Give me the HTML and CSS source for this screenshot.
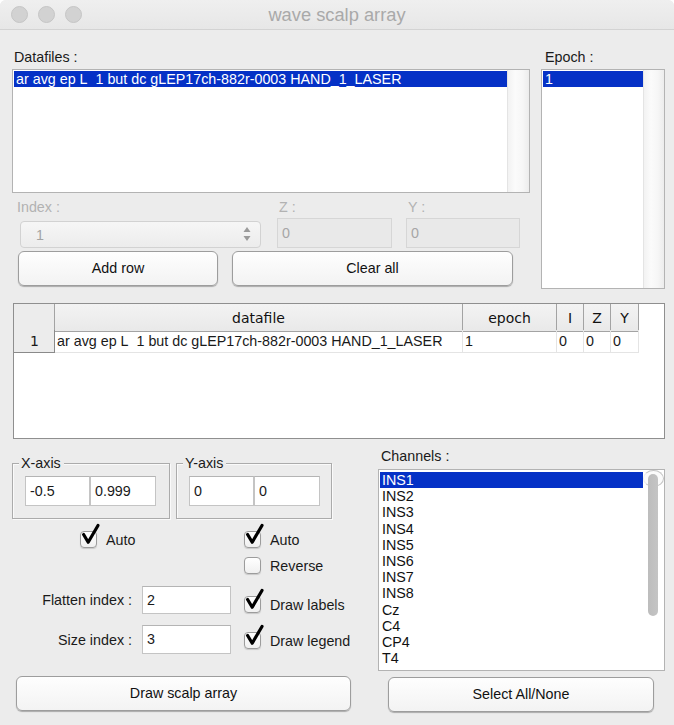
FILE: index.html
```html
<!DOCTYPE html>
<html>
<head>
<meta charset="utf-8">
<title>wave scalp array</title>
<link rel="stylesheet" href="styles.css">
</head>
<body>
<div class="window">
  <div class="titlebar">
    <div class="lights"><span class="light"></span><span class="light"></span><span class="light"></span></div>
    <div class="title">wave scalp array</div>
    <div></div>
  </div>
  <div class="content">
    <section class="top">
      <div class="top-left">
        <div class="lbl lbl-data">Datafiles :</div>
        <div class="listbox datalist">
          <div class="items"><div class="item sel">ar avg ep L&nbsp; 1 but dc gLEP17ch-882r-0003 HAND_1_LASER</div></div>
          <div class="track"></div>
        </div>
        <div class="idx">
          <div class="lbl dis l-index">Index :</div>
          <div class="lbl dis l-z">Z :</div>
          <div class="lbl dis l-y">Y :</div>
          <div class="popup">
            <span>1</span>
            <svg class="arrows" width="8" height="16" viewBox="0 0 8 16"><path d="M4 1 L7.5 6 L0.5 6 Z" fill="#9a9a9a"/><path d="M4 15 L7.5 10 L0.5 10 Z" fill="#9a9a9a"/></svg>
          </div>
          <div class="field disfield f-z">0</div>
          <div class="field disfield f-y">0</div>
        </div>
        <div class="btnrow">
          <div class="btn b-add">Add row</div>
          <div class="btn b-clear">Clear all</div>
        </div>
      </div>
      <div class="top-right">
        <div class="lbl lbl-epoch">Epoch :</div>
        <div class="listbox epochlist">
          <div class="items"><div class="item sel">1</div></div>
          <div class="track"></div>
        </div>
      </div>
    </section>

    <section class="table">
      <div class="trow thead">
        <div class="th corner"></div>
        <div class="th">datafile</div>
        <div class="th">epoch</div>
        <div class="th">I</div>
        <div class="th">Z</div>
        <div class="th">Y</div>
      </div>
      <div class="trow tbody">
        <div class="rowhead">1</div>
        <div class="td">ar avg ep L&nbsp; 1 but dc gLEP17ch-882r-0003 HAND_1_LASER</div>
        <div class="td">1</div>
        <div class="td">0</div>
        <div class="td">0</div>
        <div class="td">0</div>
      </div>
    </section>

    <section class="bottom">
      <div class="bottom-left">
        <div class="groups">
          <div class="group g-x">
            <span class="group-title">X-axis</span>
            <div class="field f-a">-0.5</div><div class="field f-b">0.999</div>
          </div>
          <div class="group g-y">
            <span class="group-title">Y-axis</span>
            <div class="field f-a">0</div><div class="field f-b">0</div>
          </div>
        </div>
        <div class="row r-auto">
          <div class="cell-a">
            <label class="check"><span class="box on"><svg width="20" height="24" viewBox="0 0 20 24"><path d="M2.6 10.5 L7.2 18.2 L17 1.5" fill="none" stroke="#000" stroke-width="3.2" stroke-linecap="round" stroke-linejoin="round"/></svg></span>Auto</label>
          </div>
          <div class="cell-b">
            <label class="check"><span class="box on"><svg width="20" height="24" viewBox="0 0 20 24"><path d="M2.6 10.5 L7.2 18.2 L17 1.5" fill="none" stroke="#000" stroke-width="3.2" stroke-linecap="round" stroke-linejoin="round"/></svg></span>Auto</label>
          </div>
        </div>
        <div class="row r-rev">
          <div class="cell-a"></div>
          <div class="cell-b">
            <label class="check"><span class="box"></span>Reverse</label>
          </div>
        </div>
        <div class="row r-flat">
          <div class="cell-a"><span class="flbl">Flatten index :</span><div class="field f-idx">2</div></div>
          <div class="cell-b">
            <label class="check"><span class="box on"><svg width="20" height="24" viewBox="0 0 20 24"><path d="M2.6 10.5 L7.2 18.2 L17 1.5" fill="none" stroke="#000" stroke-width="3.2" stroke-linecap="round" stroke-linejoin="round"/></svg></span>Draw labels</label>
          </div>
        </div>
        <div class="row r-size">
          <div class="cell-a"><span class="flbl">Size index :</span><div class="field f-idx f-size">3</div></div>
          <div class="cell-b">
            <label class="check"><span class="box on"><svg width="20" height="24" viewBox="0 0 20 24"><path d="M2.6 10.5 L7.2 18.2 L17 1.5" fill="none" stroke="#000" stroke-width="3.2" stroke-linecap="round" stroke-linejoin="round"/></svg></span>Draw legend</label>
          </div>
        </div>
        <div class="btn b-draw">Draw scalp array</div>
      </div>
      <div class="bottom-right">
        <div class="lbl lbl-chan">Channels :</div>
        <div class="listbox chanlist">
          <div class="items">
            <div class="item ch sel">INS1</div>
            <div class="item ch">INS2</div>
            <div class="item ch">INS3</div>
            <div class="item ch">INS4</div>
            <div class="item ch">INS5</div>
            <div class="item ch">INS6</div>
            <div class="item ch">INS7</div>
            <div class="item ch">INS8</div>
            <div class="item ch">Cz</div>
            <div class="item ch">C4</div>
            <div class="item ch">CP4</div>
            <div class="item ch">T4</div>
          </div>
          <div class="track light"><div class="thumb"></div></div>
        </div>
        <div class="btn b-sel">Select All/None</div>
      </div>
    </section>
  </div>
</div>
</body>
</html>
```

FILE: styles.css
```css
* { box-sizing: border-box; }
html, body { margin: 0; padding: 0; background: #ffffff; }
body {
  font-family: "Liberation Sans", Arial, sans-serif;
  font-size: 14.3px;
  color: #1a1a1a;
}
.window {
  width: 674px;
  height: 725px;
  background: #ececec;
  border-radius: 6px 6px 0 0;
  overflow: hidden;
  display: flex;
  flex-direction: column;
}
.titlebar {
  height: 30px;
  flex: none;
  border-bottom: 1px solid #d3d3d3;
  background: linear-gradient(#efefef, #e7e7e7);
  display: grid;
  grid-template-columns: 1fr auto 1fr;
  align-items: center;
}
.lights { display: flex; gap: 10px; padding-left: 11px; margin-top: -1px; }
.light {
  width: 17px; height: 17px; border-radius: 50%;
  background: #d2d2d2;
  border: 1px solid #c5c5c5;
}
.title { font-size: 18.3px; color: #a9a9a9; line-height: 20px; margin-top: 0; }

.content { flex: 1; padding: 0 9px 0 12px; display: flex; flex-direction: column; }

.lbl { height: 16px; line-height: 16px; white-space: nowrap; }
.dis { color: #b2b2b2; }

.top { display: flex; gap: 11px; margin-top: 19px; }
.top-left { width: 518px; }
.top-right { width: 124px; }
.lbl-data { margin-left: 2px; }
.lbl-epoch { margin-left: 4px; }

.listbox {
  border: 1px solid #b3b3b3;
  background: #fff;
  display: flex;
  overflow: hidden;
}
.items { flex: 1; padding: 1px 0 0 1px; overflow: hidden; }
.item { height: 16px; line-height: 16px; padding-left: 2px; white-space: pre; color: #111; }
.item.sel { background: #0531c6; color: #fff; }
.track {
  width: 22px;
  flex: none;
  background: linear-gradient(to right, #f2f2f2, #fbfbfb 35%, #f6f6f6 70%, #ececec);
  border-left: 1px solid #e4e4e4;
}
.datalist { margin-top: 4px; height: 124px; }
.epochlist { margin-top: 4px; height: 220px; }
.epochlist .track { width: 21px; }

.idx {
  display: grid;
  grid-template-columns: 265px 129px 124px;
  grid-template-rows: 16px 30px;
  row-gap: 3px;
  margin-top: 6px;
}
.l-index { margin-left: 5px; }
.l-z, .l-y { margin-left: 2px; }
.popup {
  margin: 3px 0 0 8px;
  width: 241px;
  height: 27px;
  border: 1px solid #d2d2d2;
  border-radius: 4px;
  background: linear-gradient(#f6f6f6, #ececec);
  display: flex;
  align-items: center;
  justify-content: space-between;
  padding: 0 9px 0 15px;
  color: #a3a3a3;
}
.arrows { margin-top: -2px; }
.field {
  height: 30px;
  background: #fff;
  border: 1px solid #c4c4c4;
  border-top-color: #b4b4b4;
  padding-left: 4px;
  line-height: 28px;
  white-space: nowrap;
}
.disfield { background: #e9e9e9; border-color: #d6d6d6; color: #a6a6a6; }
.f-z { width: 115px; }
.f-y { width: 114px; }

.btnrow { display: flex; margin-top: 3px; }
.btn {
  height: 35px;
  border: 1px solid #9d9d9d;
  border-radius: 6px;
  background: linear-gradient(#fefefe, #f3f3f3);
  box-shadow: 0 1px 1px rgba(0,0,0,0.28);
  display: flex;
  align-items: center;
  justify-content: center;
  color: #111;
  padding-bottom: 1px;
}
.b-add { margin-left: 6px; width: 200px; }
.b-clear { margin-left: 14px; width: 281px; }

.table {
  margin: 14px 0 0 1px;
  width: 652px;
  height: 136px;
  border: 1px solid #8f8f8f;
  background: #fff;
  flex: none;
}
.trow {
  display: grid;
  grid-template-columns: 41px 408px 94px 27px 27px 28px;
}
.thead { height: 26px; }
.th {
  background: linear-gradient(#f3f3f3, #e9e9e9);
  border-right: 1px solid #a3a3a3;
  border-bottom: 1px solid #a3a3a3;
  font-family: "DejaVu Sans", sans-serif;
  font-size: 14px;
  color: #111;
  text-align: center;
  line-height: 25px;
  padding-top: 2px;
}
.th.corner { background: #ececec; }
.tbody { height: 22px; }
.rowhead {
  background: #ececec;
  border-right: 1px solid #8a8a8a;
  border-bottom: 1px solid #8a8a8a;
  font-family: "DejaVu Sans", sans-serif;
  font-size: 14px;
  text-align: center;
  line-height: 21px;
  padding: 1px 0 0 1px;
}
.td {
  border-right: 1px solid #e4e4e4;
  border-bottom: 1px solid #e4e4e4;
  padding: 2px 0 0 2px;
  line-height: 19px;
  white-space: pre;
  overflow: hidden;
}

.bottom { display: flex; flex: 1; }
.bottom-left { width: 339px; padding-top: 16px; }
.bottom-right { width: 287px; margin-left: 27px; padding-top: 9px; }

.groups { display: flex; gap: 6px; }
.group {
  position: relative;
  margin-top: 8px;
  border: 1px solid #ababab;
  box-shadow: inset 1px 1px 0 #fafafa, 1px 1px 0 #fafafa;
  padding: 12px 11px 12px 12px;
  display: flex;
}
.g-x { width: 158px; }
.g-y { width: 156px; }
.group-title {
  position: absolute;
  top: -9px;
  left: 6px;
  padding: 0 3px 0 2px;
  background: #ececec;
  line-height: 16px;
}
.group .f-a { width: 65px; }
.group .f-b { width: 66px; }

.row { display: grid; grid-template-columns: 232px 1fr; }
.r-auto { margin-top: 12px; }
.r-auto .cell-a { padding-left: 68px; }
.r-rev { margin-top: 9px; }
.r-flat { margin-top: 12px; }
.r-size { margin-top: 11px; }
.r-flat .cell-b { padding-top: 10px; }
.r-size .cell-b { padding-top: 7px; }
.cell-a { display: flex; align-items: center; }
.flbl { width: 120px; text-align: right; margin-right: 10px; white-space: nowrap; }
.f-idx { width: 89px; height: 28px; line-height: 26px; }
.f-size { height: 29px; line-height: 27px; }

.check { display: flex; align-items: center; gap: 9px; height: 17px; white-space: nowrap; }
.box {
  position: relative;
  width: 17px; height: 17px;
  flex: none;
  border: 1px solid #9c9c9c;
  border-radius: 4px;
  background: linear-gradient(#ffffff, #f0f0f0);
  box-shadow: 0 1px 1px rgba(0,0,0,0.15);
}
.box svg { position: absolute; left: 0; top: -8px; overflow: visible; }

.b-draw { margin: 22px 0 0 4px; width: 335px; }

.lbl-chan { margin-left: 3px; }
.chanlist { margin-top: 5px; height: 202px; }
.item.ch { height: 16.2px; line-height: 16.2px; padding-left: 2px; }
.chanlist .items { padding-top: 2px; }
.track.light {
  width: 21px;
  background: #fbfbfb;
  border-left: 1px solid #ededed;
  padding: 3px 0 0 4px;
}
.thumb {
  width: 10px;
  height: 142px;
  background: linear-gradient(to right, #bdbdbd, #c4c4c4);
  border-radius: 10px;
}
.b-sel { margin: 6px 0 0 10px; width: 266px; }
```
